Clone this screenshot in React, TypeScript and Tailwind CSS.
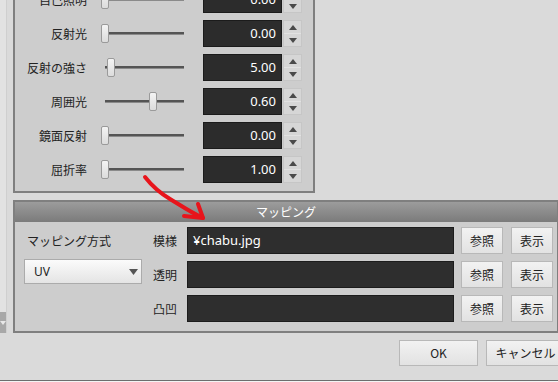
import React from 'react';

// Material dialog: top parameter panel + mapping panel + OK/Cancel
const params = [
  { label: '自己照明', value: '0.00', thumb: 'left-[2px]' },
  { label: '反射光', value: '0.00', thumb: 'left-[2px]' },
  { label: '反射の強さ', value: '5.00', thumb: 'left-[8px]' },
  { label: '周囲光', value: '0.60', thumb: 'left-[50px]' },
  { label: '鏡面反射', value: '0.00', thumb: 'left-[2px]' },
  { label: '屈折率', value: '1.00', thumb: 'left-[2px]' },
];

const maps = [
  { label: '模様', file: '¥chabu.jpg' },
  { label: '透明', file: '' },
  { label: '凸凹', file: '' },
];

function Spinner() {
  return (
    <div className="ml-[1px] w-[19px] h-[27px] flex flex-col bg-[#d6d6d6] border border-[#c6c6c6]">
      <div className="flex-1 flex items-center justify-center border-b border-[#e2e2e2]">
        <svg width="8" height="5" viewBox="0 0 8 5"><path d="M0 5 L4 0 L8 5 Z" fill="#4a4a4a" /></svg>
      </div>
      <div className="flex-1 flex items-center justify-center">
        <svg width="8" height="5" viewBox="0 0 8 5"><path d="M0 0 L4 5 L8 0 Z" fill="#4a4a4a" /></svg>
      </div>
    </div>
  );
}

function Btn({ children, className = '' }: { children: React.ReactNode; className?: string }) {
  return (
    <div
      className={`flex items-center justify-center bg-gradient-to-b from-[#f2f2f2] to-[#e2e2e2] border border-[#b8b8b8] text-[12px] text-[#222] ${className}`}
    >
      {children}
    </div>
  );
}

export default function App() {
  return (
    <div className="relative w-[558px] h-[382px] overflow-hidden bg-[#dadada] flex flex-col font-['Noto_Sans','Noto_Sans_CJK_JP',sans-serif] text-[#222]">
      <div className="flex -mt-[30px]">
        {/* left list scrollbar (cut off) */}
        <div className="w-[8px] flex flex-col bg-[#e2e2e2] border-r border-[#cfcfcf]">
          <div className="flex-1" />
          <div className="h-[21px] bg-[#a8a8a8] flex items-center justify-center">
            <svg width="6" height="4" viewBox="0 0 6 4"><path d="M0 0 L3 4 L6 0 Z" fill="#e8e8e8" /></svg>
          </div>
        </div>

        <div className="ml-[6px] w-[546px] shrink-0 flex flex-col">
          {/* parameter panel */}
          <div className="w-[302px] border-2 border-[#7f7f7f] bg-[#cdcdcd] pt-[14px] pb-[8px] flex flex-col gap-[7px]">
            {params.map((p) => (
              <div key={p.label} className="flex items-center h-[27px]">
                <div className="w-[72px] text-right text-[12px] font-['Noto_Sans_CJK_JP',sans-serif]">{p.label}</div>
                <div className="relative ml-[12px] w-[90px] h-[27px] flex items-center">
                  <div className="ml-[6px] w-[79px] h-[3px] bg-[#545454] border-b border-[#8a8a8a]" />
                  <div
                    className={`absolute top-[4px] ${p.thumb} w-[8px] h-[19px] rounded-[2px] bg-gradient-to-b from-[#f4f4f4] to-[#dcdcdc] border border-[#9a9a9a]`}
                  />
                </div>
                <div className="ml-[14px] w-[79px] h-[27px] bg-[#2c2c2c] border border-[#1b1b1b] flex items-center justify-end pr-[5px] text-[13px] text-white">
                  {p.value}
                </div>
                <Spinner />
              </div>
            ))}
          </div>

          {/* mapping panel */}
          <div className="mt-[7px] border-2 border-[#7f7f7f] flex flex-col">
            <div className="h-[20px] bg-gradient-to-b from-[#9c9c9c] to-[#7b7b7b] flex items-center justify-center text-[12px] text-white font-['Noto_Sans_CJK_JP',sans-serif]">
              マッピング
            </div>
            <div className="flex bg-[#cdcdcd] pt-[5px] pb-[9px] text-[12px] font-['Noto_Sans_CJK_JP',sans-serif]">
              <div className="ml-[9px] w-[118px] flex flex-col">
                <div className="h-[27px] flex items-center pl-[3px]">マッピング方式</div>
                <div className="mt-[5px] h-[25px] flex items-center justify-between pl-[9px] pr-[3px] bg-gradient-to-b from-[#fbfbfb] to-[#e4e4e4] border border-[#ababab] font-['Noto_Sans',sans-serif] text-[12px]">
                  <span>UV</span>
                  <svg width="9" height="6" viewBox="0 0 9 6"><path d="M0 0 L9 0 L4.5 6 Z" fill="#555" /></svg>
                </div>
              </div>
              <div className="ml-[11px] flex flex-col gap-[7px]">
                {maps.map((m) => (
                  <div key={m.label} className="flex h-[27px]">
                    <div className="w-[34px] flex items-center">{m.label}</div>
                    <div className="w-[267px] bg-[#2e2e2e] border border-[#1c1c1c] flex items-center pl-[5px] text-[13px] text-white font-['Noto_Sans',sans-serif]">
                      {m.file}
                    </div>
                    <Btn className="ml-[7px] w-[42px]">参照</Btn>
                    <Btn className="ml-[8px] w-[42px]">表示</Btn>
                  </div>
                ))}
              </div>
            </div>
          </div>
        </div>
      </div>

      {/* dialog buttons */}
      <div className="mt-[7px] pl-[399px] flex gap-[8px] font-['Noto_Sans_CJK_JP',sans-serif]">
        <Btn className="w-[79px] h-[26px] shrink-0">OK</Btn>
        <Btn className="w-[79px] h-[26px] shrink-0">キャンセル</Btn>
      </div>

      <div className="mt-auto h-[2px] border-t border-[#6e6e6e] bg-[#f4f4f4]" />

      {/* hand-drawn red arrow */}
      <svg className="absolute top-0 left-0 pointer-events-none" width="558" height="382" viewBox="0 0 558 382">
        <path d="M145 177 C 152 186, 160 193, 170 199 S 190 212, 203 218" fill="none" stroke="#e8141b" strokeWidth="4" strokeLinecap="round" />
        <path d="M198 204 L203 218 L184 216" fill="none" stroke="#e8141b" strokeWidth="4" strokeLinecap="round" strokeLinejoin="round" />
      </svg>
    </div>
  );
}
